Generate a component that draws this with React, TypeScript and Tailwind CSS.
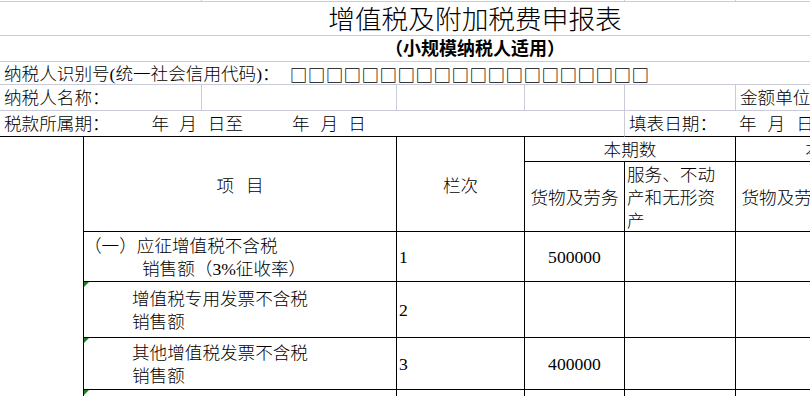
const grid = "border-[#c9ccd8]";

function Flag() {
  return (
    <svg className="absolute left-0 top-0" width="6" height="6" viewBox="0 0 6 6">
      <polygon points="0,0 5,0 0,5" fill="#1f7d26" />
    </svg>
  );
}

export default function App() {
  return (
    <div className="w-[810px] h-[396px] overflow-hidden bg-white text-black font-['Liberation_Serif','Noto_Sans_CJK_SC',serif] font-light text-[17.6px]">
      <div className="grid w-[946px] grid-cols-[84px_118px_195px_128px_100px_111px_100px_110px] grid-rows-[2px_34px_26px_23px_26px_26px_25px_70px_50px_56px_52px_40px] whitespace-nowrap">
        {/* tail of the row above */}
        <div className={`col-span-2 border-r border-b ${grid}`} />
        <div className={`col-span-3 border-r border-b ${grid}`} />
        <div className={`border-r border-b ${grid}`} />
        <div className={`col-span-2 border-r border-b ${grid}`} />

        {/* title */}
        <div className={`col-span-8 border-b ${grid} flex items-center justify-center pt-[4px] pl-[4px] text-[26.7px] leading-none`}>
          增值税及附加税费申报表
        </div>
        <div className={`col-span-8 border-b ${grid} flex items-center justify-center pt-[1px] pl-[4px] text-[18px] font-bold leading-none`}>
          （小规模纳税人适用）
        </div>

        {/* taxpayer id */}
        <div className={`col-span-8 border-b ${grid} flex items-center pl-[4px] pt-[3px] leading-none`}>
          <span>纳税人识别号(统一社会信用代码)：</span>
          <span className="ml-[10px] font-['Noto_Sans_CJK_SC',sans-serif] font-medium tracking-[0.4px]">□□□□□□□□□□□□□□□□□□□□</span>
        </div>

        {/* taxpayer name */}
        <div className={`col-span-2 border-r border-b ${grid} flex items-center pl-[4px] pt-[3px] leading-none`}>纳税人名称：</div>
        <div className={`border-r border-b ${grid}`} />
        <div className={`border-r border-b ${grid}`} />
        <div className={`border-r border-b ${grid}`} />
        <div className={`border-r border-b ${grid}`} />
        <div className={`col-span-2 border-r border-b ${grid} flex items-center pl-[4px] pt-[3px] leading-none`}>金额单位：元（列至角分）</div>

        {/* period */}
        <div className={`col-span-5 border-r ${grid} border-b border-b-black flex items-center pl-[4px] pt-[3px] leading-none`}>
          <span>税款所属期：</span>
          <span className="ml-[42px]">年</span>
          <span className="ml-[10px]">月</span>
          <span className="ml-[11px]">日至</span>
          <span className="ml-[49px]">年</span>
          <span className="ml-[11px]">月</span>
          <span className="ml-[10px]">日</span>
        </div>
        <div className="col-span-3 border-b border-black flex items-center pl-[4px] pt-[3px] leading-none">
          <span>填表日期：</span>
          <span className="ml-[22px]">年</span>
          <span className="ml-[11px]">月</span>
          <span className="ml-[11px]">日</span>
        </div>

        {/* table head */}
        <div className="row-span-6 border-r border-black" />
        <div className="col-span-2 row-span-2 border-r border-b border-black flex items-center justify-center pt-[6px] leading-none">
          <span>项</span>
          <span className="ml-[12px]">目</span>
        </div>
        <div className="row-span-2 border-r border-b border-black flex items-center justify-center pt-[6px] leading-none">栏次</div>
        <div className="col-span-2 border-r border-b border-black flex items-center justify-center pt-[3px] leading-none">本期数</div>
        <div className="col-span-2 border-r border-b border-black flex items-center justify-center pt-[3px] leading-none">本年累计</div>
        <div className="border-r border-b border-black flex items-center justify-center pt-[5px] leading-none">货物及劳务</div>
        <div className="border-r border-b border-black flex items-center pl-[2px] pt-[3px] leading-[23px]">
          <div>
            服务、不动
            <br />
            产和无形资
            <br />
            产
          </div>
        </div>
        <div className="border-r border-b border-black flex items-center justify-center pt-[5px] leading-none">货物及劳务</div>
        <div className="border-r border-b border-black flex items-center pl-[2px] pt-[3px] leading-[23px]">
          <div>
            服务、不动
            <br />
            产和无形资
            <br />
            产
          </div>
        </div>

        {/* line 1 */}
        <div className="col-span-2 border-r border-b border-black flex flex-col justify-center pt-[2px] leading-[23px]">
          <div>（一）应征增值税不含税</div>
          <div className="pl-[58px]">销售额（3%征收率）</div>
        </div>
        <div className="border-r border-b border-black flex items-center pl-[2px] pt-[2px]">1</div>
        <div className="border-r border-b border-black flex items-center justify-center pt-[2px]">500000</div>
        <div className="border-r border-b border-black" />
        <div className="border-r border-b border-black" />
        <div className="border-r border-b border-black" />

        {/* line 2 */}
        <div className="relative col-span-2 border-r border-b border-black flex flex-col justify-center pl-[48px] pt-[3px] leading-[23px]">
          <Flag />
          <div>增值税专用发票不含税</div>
          <div>销售额</div>
        </div>
        <div className="border-r border-b border-black flex items-center pl-[2px] pt-[2px]">2</div>
        <div className="border-r border-b border-black" />
        <div className="border-r border-b border-black" />
        <div className="border-r border-b border-black" />
        <div className="border-r border-b border-black" />

        {/* line 3 */}
        <div className="relative col-span-2 border-r border-b border-black flex flex-col justify-center pl-[48px] pt-[3px] leading-[23px]">
          <Flag />
          <div>其他增值税发票不含税</div>
          <div>销售额</div>
        </div>
        <div className="border-r border-b border-black flex items-center pl-[2px] pt-[2px]">3</div>
        <div className="border-r border-b border-black flex items-center justify-center pt-[2px]">400000</div>
        <div className="border-r border-b border-black" />
        <div className="border-r border-b border-black" />
        <div className="border-r border-b border-black" />

        {/* line 4 */}
        <div className="relative col-span-2 border-r border-black">
          <Flag />
        </div>
        <div className="border-r border-black" />
        <div className="border-r border-black" />
        <div className="border-r border-black" />
        <div className="border-r border-black" />
        <div className="border-r border-black" />
      </div>
    </div>
  );
}
